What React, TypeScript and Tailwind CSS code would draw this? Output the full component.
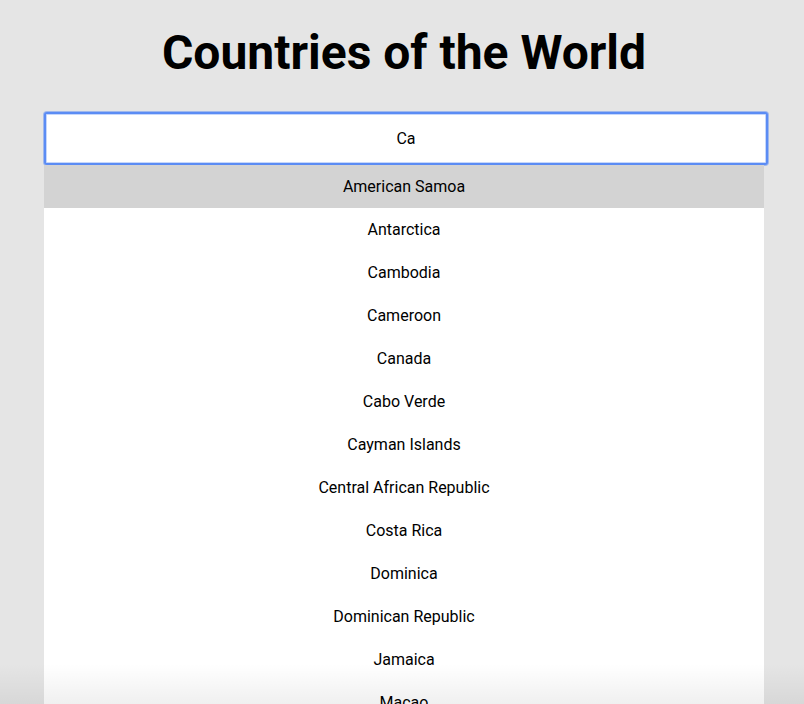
import React from "react";

const countries = [
  "American Samoa",
  "Antarctica",
  "Cambodia",
  "Cameroon",
  "Canada",
  "Cabo Verde",
  "Cayman Islands",
  "Central African Republic",
  "Costa Rica",
  "Dominica",
  "Dominican Republic",
  "Jamaica",
  "Macao",
  "Madagascar",
  "Mexico",
];

export default function App() {
  return (
    <div
      className="relative h-[704px] overflow-hidden bg-[#e5e5e5] text-black"
      style={{ fontFamily: "Roboto, 'Noto Sans', sans-serif" }}
    >
      <div className="ml-[44px] w-[720px]">
        <h1 className="pt-[25px] text-center text-[48px] font-bold leading-[56px]">
          Countries of the World
        </h1>
        <div className="mt-[31px] w-[724px]">
          <input
            readOnly
            value="Ca"
            className="block h-[53px] w-[724px] rounded-[3px] border-2 border-[#5b8cf4] bg-white text-center text-[16px] text-black shadow-[0_0_0_1px_rgba(91,140,244,0.5),inset_0_0_0_1px_rgba(91,140,244,0.35)] outline-none"
          />
        </div>
        <ul className="bg-white">
          {countries.map((c, i) => (
            <li
              key={c}
              className={
                i === 0
                  ? "flex h-[43px] items-center justify-center bg-[#d3d3d3] text-[16px]"
                  : "flex h-[43px] items-center justify-center text-[16px]"
              }
            >
              {c}
            </li>
          ))}
        </ul>
      </div>
      <div className="pointer-events-none absolute bottom-0 left-0 right-0 h-[40px] bg-gradient-to-b from-transparent to-black/[0.06]" />
    </div>
  );
}
